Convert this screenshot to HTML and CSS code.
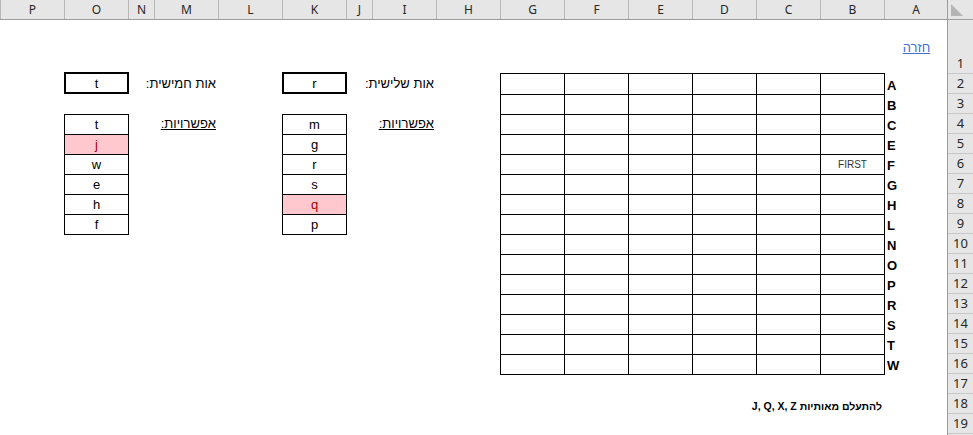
FILE: index.html
```html
<!DOCTYPE html>
<html lang="he">
<head>
<meta charset="utf-8">
<title>Sheet</title>
<link rel="stylesheet" href="styles.css">
</head>
<body>
<div class="app">
  <div class="colheads">
    <div class="ch">P</div><div class="ch">O</div><div class="ch">N</div><div class="ch">M</div>
    <div class="ch">L</div><div class="ch">K</div><div class="ch">J</div><div class="ch">I</div>
    <div class="ch">H</div><div class="ch">G</div><div class="ch">F</div><div class="ch">E</div>
    <div class="ch">D</div><div class="ch">C</div><div class="ch">B</div><div class="ch">A</div>
  </div>
  <div class="corner">
    <svg class="tri" width="12" height="12" viewBox="0 0 12 12"><polygon points="0,0 0,12 12,12" fill="#b4b4b4"/></svg>
  </div>

  <div class="body">
    <a class="back" href="#">חזרה</a>

    <!-- fifth letter -->
    <div class="box col-o">t</div>
    <div class="label col-m row2" dir="rtl">אות חמישית:</div>
    <div class="label ul col-m row4" dir="rtl">אפשרויות:</div>
    <div class="list col-o">
      <div class="li">t</div>
      <div class="li bad">j</div>
      <div class="li">w</div>
      <div class="li">e</div>
      <div class="li">h</div>
      <div class="li">f</div>
    </div>

    <!-- third letter -->
    <div class="box col-k">r</div>
    <div class="label col-i row2" dir="rtl">אות שלישית:</div>
    <div class="label ul col-i row4" dir="rtl">אפשרויות:</div>
    <div class="list col-k">
      <div class="li">m</div>
      <div class="li">g</div>
      <div class="li">r</div>
      <div class="li">s</div>
      <div class="li bad">q</div>
      <div class="li">p</div>
    </div>

    <!-- main board -->
    <div class="board">
      <div class="bc"></div><div class="bc"></div><div class="bc"></div><div class="bc"></div><div class="bc"></div><div class="bc"></div>
      <div class="bc"></div><div class="bc"></div><div class="bc"></div><div class="bc"></div><div class="bc"></div><div class="bc"></div>
      <div class="bc"></div><div class="bc"></div><div class="bc"></div><div class="bc"></div><div class="bc"></div><div class="bc"></div>
      <div class="bc"></div><div class="bc"></div><div class="bc"></div><div class="bc"></div><div class="bc"></div><div class="bc"></div>
      <div class="bc"></div><div class="bc"></div><div class="bc"></div><div class="bc"></div><div class="bc"></div><div class="bc first">FIRST</div>
      <div class="bc"></div><div class="bc"></div><div class="bc"></div><div class="bc"></div><div class="bc"></div><div class="bc"></div>
      <div class="bc"></div><div class="bc"></div><div class="bc"></div><div class="bc"></div><div class="bc"></div><div class="bc"></div>
      <div class="bc"></div><div class="bc"></div><div class="bc"></div><div class="bc"></div><div class="bc"></div><div class="bc"></div>
      <div class="bc"></div><div class="bc"></div><div class="bc"></div><div class="bc"></div><div class="bc"></div><div class="bc"></div>
      <div class="bc"></div><div class="bc"></div><div class="bc"></div><div class="bc"></div><div class="bc"></div><div class="bc"></div>
      <div class="bc"></div><div class="bc"></div><div class="bc"></div><div class="bc"></div><div class="bc"></div><div class="bc"></div>
      <div class="bc"></div><div class="bc"></div><div class="bc"></div><div class="bc"></div><div class="bc"></div><div class="bc"></div>
      <div class="bc"></div><div class="bc"></div><div class="bc"></div><div class="bc"></div><div class="bc"></div><div class="bc"></div>
      <div class="bc"></div><div class="bc"></div><div class="bc"></div><div class="bc"></div><div class="bc"></div><div class="bc"></div>
      <div class="bc"></div><div class="bc"></div><div class="bc"></div><div class="bc"></div><div class="bc"></div><div class="bc"></div>
    </div>
    <div class="letters">
      <div class="lt">A</div><div class="lt">B</div><div class="lt">C</div><div class="lt">E</div><div class="lt">F</div>
      <div class="lt">G</div><div class="lt">H</div><div class="lt">L</div><div class="lt">N</div><div class="lt">O</div>
      <div class="lt">P</div><div class="lt">R</div><div class="lt">S</div><div class="lt">T</div><div class="lt">W</div>
    </div>

    <div class="note" dir="rtl">להתעלם מאותיות J, Q, X, Z</div>
  </div>

  <div class="rowheads">
    <div class="rh">1</div><div class="rh">2</div><div class="rh">3</div><div class="rh">4</div><div class="rh">5</div>
    <div class="rh">6</div><div class="rh">7</div><div class="rh">8</div><div class="rh">9</div><div class="rh">10</div>
    <div class="rh">11</div><div class="rh">12</div><div class="rh">13</div><div class="rh">14</div><div class="rh">15</div>
    <div class="rh">16</div><div class="rh">17</div><div class="rh">18</div><div class="rh">19</div><div class="rh"></div>
  </div>
</div>
</body>
</html>
```
FILE: styles.css
```css
html, body {
  margin: 0;
  padding: 0;
  background: #fff;
}
body {
  width: 973px;
  height: 435px;
  overflow: hidden;
  font-family: "Liberation Sans", Arial, sans-serif;
  color: #000;
}
.app {
  display: grid;
  grid-template-columns: 947px 26px;
  grid-template-rows: 20px 415px;
  width: 973px;
  height: 435px;
  overflow: hidden;
}

/* column headers */
.colheads {
  display: grid;
  grid-template-columns: 64px 64px 26px 64px 64px 64px 26px 64px 64px 64px 64px 64px 64px 64px 64px 63px;
  background: #e6e6e6;
  border-bottom: 1px solid #9c9c9c;
  box-sizing: border-box;
}
.ch {
  border-left: 1px solid #b8b8b8;
  display: flex;
  align-items: center;
  justify-content: center;
  font-family: "Noto Sans", "Liberation Sans", sans-serif;
  font-size: 12px;
  color: #262626;
  line-height: 19px;
}
.corner {
  background: #e6e6e6;
  border-left: 1px solid #9c9c9c;
  border-bottom: 1px solid #9c9c9c;
  box-sizing: border-box;
  display: flex;
  align-items: flex-end;
  padding: 0 0 3px 3px;
}
.tri { display: block; }

/* row headers */
.rowheads {
  display: grid;
  grid-template-rows: 54px repeat(19, 20px);
  background: #e6e6e6;
  border-left: 1px solid #9c9c9c;
  box-sizing: border-box;
}
.rh {
  border-bottom: 1px solid #c8c8c8;
  display: flex;
  align-items: flex-end;
  justify-content: center;
  padding-bottom: 3px;
  box-sizing: border-box;
  font-family: "Noto Sans", "Liberation Sans", sans-serif;
  font-size: 13px;
  line-height: 14px;
  color: #262626;
}

/* sheet body */
.body {
  display: grid;
  grid-template-columns: 64px 64px 26px 64px 64px 64px 26px 64px 64px 64px 64px 64px 64px 64px 64px 63px;
  grid-template-rows: 54px repeat(19, 20px);
}
.back {
  grid-column: 16;
  grid-row: 1;
  align-self: center;
  justify-self: center;
  color: #4070cc;
  font-size: 13px;
  text-decoration: underline;
  direction: rtl;
  margin-left: 2px;
}
.col-o { grid-column: 2; }
.col-m { grid-column: 4; }
.col-k { grid-column: 6; }
.col-i { grid-column: 8; }
.row2 { grid-row: 2; }
.row4 { grid-row: 4; }

.box {
  grid-row: 2;
  width: 65px;
  height: 22px;
  margin-top: -2px;
  border: 2px solid #000;
  box-sizing: border-box;
  display: flex;
  align-items: center;
  justify-content: center;
  font-size: 13px;
}
.label {
  justify-self: stretch;
  align-self: center;
  white-space: nowrap;
  text-align: right;
  padding-right: 2px;
  font-size: 13px;
  line-height: 18px;
}
.ul { text-decoration: underline; }

.list {
  grid-row: 4 / span 6;
  width: 65px;
  height: 121px;
  display: grid;
  grid-template-rows: repeat(6, 19px);
  gap: 1px;
  padding: 1px;
  box-sizing: border-box;
  background: #000;
}
.li {
  background: #fff;
  display: flex;
  align-items: center;
  justify-content: center;
  font-size: 13px;
  line-height: 15px;
}
.li.bad {
  background: #ffc7ce;
  color: #9c0006;
}

.board {
  grid-column: 10 / span 6;
  grid-row: 2 / span 15;
  margin-top: -1px;
  width: 385px;
  height: 302px;
  display: grid;
  grid-template-columns: repeat(6, 63px);
  grid-template-rows: 20px repeat(14, 19px);
  gap: 1px;
  padding: 1px;
  box-sizing: border-box;
  background: #000;
}
.bc {
  background: #fff;
}
.bc.first {
  display: flex;
  align-items: center;
  justify-content: center;
  font-size: 10px;
  color: #333;
}
.letters {
  grid-column: 16;
  grid-row: 2 / span 15;
  display: flex;
  flex-direction: column;
  padding-top: 2px;
}
.lt {
  height: 20px;
  line-height: 20px;
  padding-left: 3px;
  font-size: 13px;
  font-weight: bold;
}
.note {
  grid-column: 15;
  grid-row: 18;
  align-self: center;
  white-space: nowrap;
  text-align: right;
  padding-right: 2px;
  font-size: 10.5px;
  font-weight: bold;
  margin-top: 3px;
}
```
